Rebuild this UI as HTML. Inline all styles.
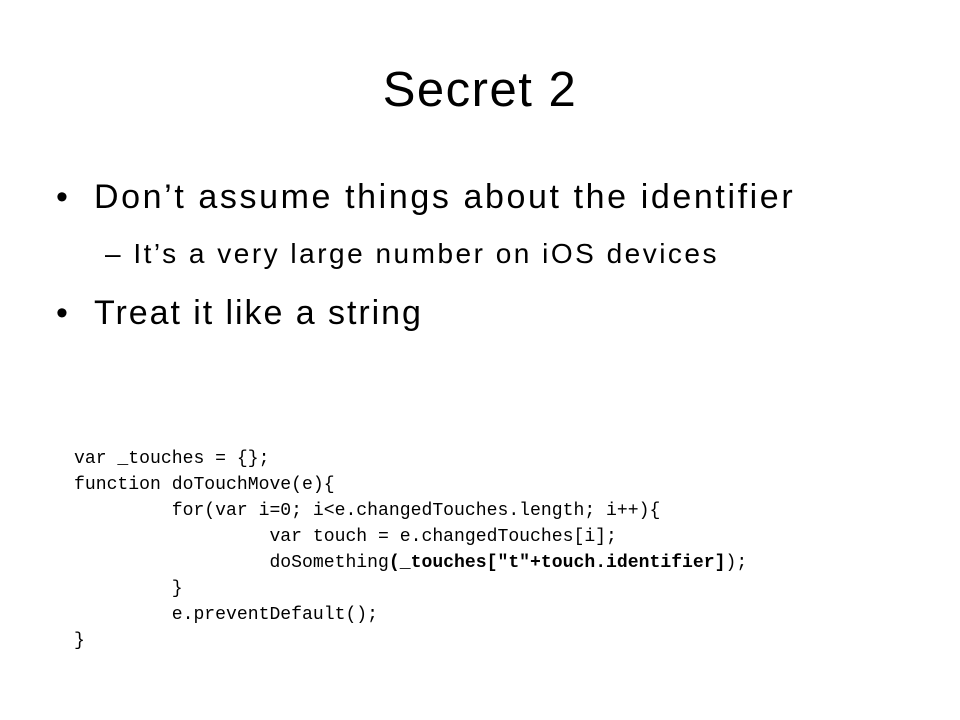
<!DOCTYPE html>
<html><head><meta charset="utf-8"><style>
html,body{margin:0;padding:0;background:#fff;width:960px;height:720px;overflow:hidden;position:relative;font-family:"Liberation Sans",sans-serif;color:#000}
.a{position:absolute;white-space:nowrap}
.t{left:0;width:960px;text-align:center;top:62px;font-size:49px;letter-spacing:1.5px}
.b{font-size:34px;letter-spacing:2.6px}
.s{font-size:28px;letter-spacing:2.5px}
pre{position:absolute;left:74px;top:446px;margin:0;font-family:"Liberation Mono",monospace;font-size:18.1px;line-height:26px;letter-spacing:0px}
</style></head><body>
<div class="a t">Secret 2</div>
<div class="a b" style="left:56px;top:178px">•</div>
<div class="a b" style="left:94px;top:178px">Don’t assume things about the identifier</div>
<div class="a s" style="left:105px;top:238px">– It’s a very large number on iOS devices</div>
<div class="a b" style="left:56px;top:294px">•</div>
<div class="a b" style="left:94px;top:294px;letter-spacing:1.95px">Treat it like a string</div>
<pre>var _touches = {};
function doTouchMove(e){
         for(var i=0; i&lt;e.changedTouches.length; i++){
                  var touch = e.changedTouches[i];
                  doSomething<b>(_touches["t"+touch.identifier]</b>);
         }
         e.preventDefault();
}</pre>
</body></html>
